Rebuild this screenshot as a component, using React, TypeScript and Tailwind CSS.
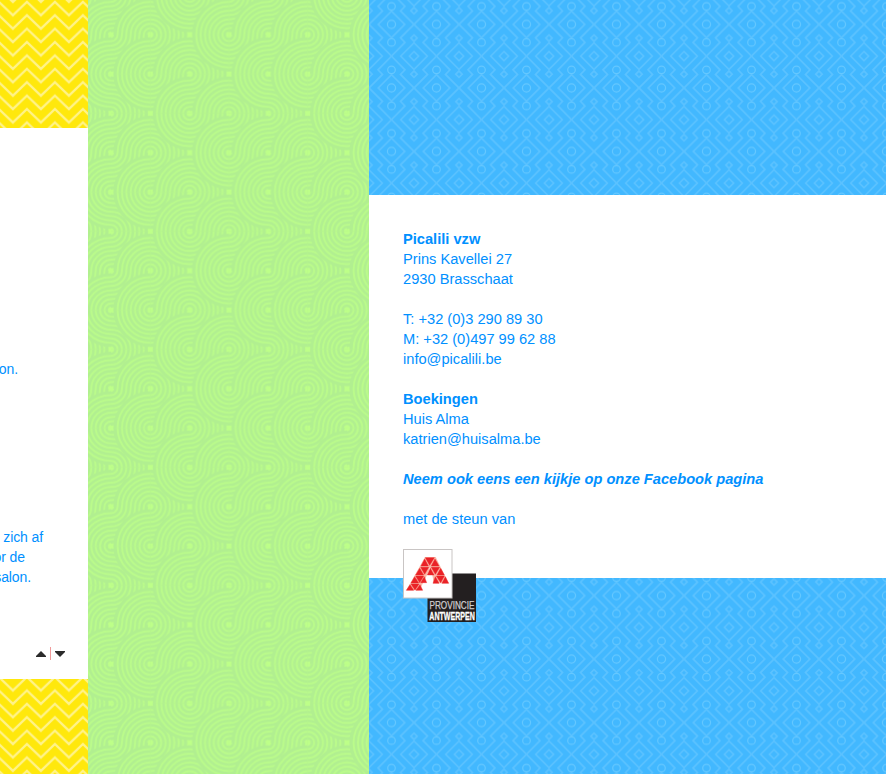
import React from "react";

type Corner = [number, number];

const NODE = 39.333;
const STEP = NODE / 9;

// Every cell of the swirl tile: column, row, front centre and back centre.
const CELLS: { c: number; r: number; front: Corner; back: Corner }[] = [
  { c: 0, r: 0, front: [1, 1], back: [0, 0] },
  { c: 1, r: 0, front: [2, 1], back: [1, 0] },
  { c: 2, r: 0, front: [3, 0], back: [2, 1] },
  { c: 3, r: 0, front: [4, 1], back: [3, 0] },
  { c: 0, r: 1, front: [1, 1], back: [0, 2] },
  { c: 1, r: 1, front: [2, 2], back: [1, 1] },
  { c: 2, r: 1, front: [3, 2], back: [2, 1] },
  { c: 3, r: 1, front: [4, 1], back: [3, 2] },
  { c: 0, r: 2, front: [1, 3], back: [0, 2] },
  { c: 1, r: 2, front: [2, 2], back: [1, 3] },
  { c: 2, r: 2, front: [3, 3], back: [2, 2] },
  { c: 3, r: 2, front: [4, 3], back: [3, 2] },
];

const RINGS = [8, 7, 6, 5, 4, 3, 2, 1];

function Rings({ at }: { at: Corner }) {
  const cx = at[0] * NODE;
  const cy = at[1] * NODE;
  return (
    <g>
      <circle cx={cx} cy={cy} r={STEP * 8.45} fill="#b1ef90" />
      <circle cx={cx} cy={cy} r={STEP * 8} fill="#bafb8b" />
      {RINGS.map((k) => (
        <circle key={k} cx={cx} cy={cy} r={STEP * k} fill="none" stroke="#b1ef90" strokeWidth="2.4" />
      ))}
      <circle cx={cx} cy={cy} r="2.6" fill="#bdff88" />
    </g>
  );
}

function Swirls() {
  return (
    <svg className="block h-full w-full" aria-hidden="true">
      <defs>
        {CELLS.map((s, i) => (
          <clipPath key={i} id={`cell${i}`}>
            <rect x={s.c * NODE} y={s.r * NODE} width={NODE + 0.05} height={NODE + 0.05} />
          </clipPath>
        ))}
        <pattern
          id="swirl"
          width={NODE * 4}
          height={NODE * 3}
          patternUnits="userSpaceOnUse"
          patternTransform="translate(23 34.7)"
        >
          <rect width={NODE * 4} height={NODE * 3} fill="#bdff88" />
          {CELLS.map((s, i) => (
            <g key={i} clipPath={`url(#cell${i})`}>
              <Rings at={s.back} />
              <Rings at={s.front} />
            </g>
          ))}
        </pattern>
      </defs>
      <rect width="100%" height="100%" fill="url(#swirl)" />
    </svg>
  );
}

function Chevrons({ id, y }: { id: string; y: number }) {
  return (
    <svg className="block h-full w-full" aria-hidden="true">
      <defs>
        <pattern
          id={id}
          width="28"
          height="13.4"
          patternUnits="userSpaceOnUse"
          patternTransform={`translate(12.9 ${y})`}
        >
          <rect width="28" height="13.4" fill="#ffe80c" />
          {[-13.4, 0, 13.4].map((d) => (
            <path
              key={d}
              d={`M-14 ${d}L0 ${d + 13.4}L14 ${d}L28 ${d + 13.4}L42 ${d}`}
              fill="none"
              stroke="#fff38a"
              strokeWidth="2.3"
            />
          ))}
        </pattern>
      </defs>
      <rect width="100%" height="100%" fill={`url(#${id})`} />
    </svg>
  );
}

const diamond = (x: number, y: number, r: number) =>
  `M${x - r} ${y}L${x} ${y - r}L${x + r} ${y}L${x} ${y + r}Z`;

function Lattice({ id, y }: { id: string; y: number }) {
  return (
    <svg className="block h-full w-full" aria-hidden="true">
      <defs>
        <pattern
          id={id}
          width="45"
          height="63.5"
          patternUnits="userSpaceOnUse"
          patternTransform={`translate(0 ${y})`}
        >
          <rect width="45" height="63.5" fill="#42b8ff" />
          <g fill="none" stroke="#5bc2ff" strokeWidth="1.7">
            {[0, 63.5].map((d) => (
              <g key={d}>
                <path d={diamond(22.5, d, 13.3)} />
                <g stroke="#65c8ff" strokeWidth="1.2">
                  <circle cx="22.5" cy={d} r="4.1" />
                  <circle cx="22.5" cy={d - 18} r="3.8" />
                  <circle cx="22.5" cy={d + 18} r="3.8" />
                </g>
              </g>
            ))}
            {[0, 45].map((x) => (
              <g key={x}>
                <path d={diamond(x, 31.75, 13.3)} />
                <path d={diamond(x, 31.75, 4.6)} />
                <path d={diamond(x, 13.75, 3.2)} />
                <path d={diamond(x, 49.75, 3.2)} />
              </g>
            ))}
            <path d="M0 0L13.5 13.5L9 18L22.5 31.75L9 45.5L13.5 50L0 63.5" />
            <path d="M45 0L31.5 13.5L36 18L22.5 31.75L36 45.5L31.5 50L45 63.5" />
          </g>
        </pattern>
      </defs>
      <rect width="100%" height="100%" fill={`url(#${id})`} />
    </svg>
  );
}

function ProvinceLogo() {
  return (
    <svg className="block h-[74px] w-[74px]" viewBox="0 0 74 74" role="img" aria-label="Provincie Antwerpen">
      <rect x="24.5" y="24.5" width="48.5" height="48.5" fill="#231f20" />
      <rect x="0.5" y="0.5" width="48.5" height="48.5" fill="#fff" stroke="#c9c5c4" />
      <g transform="scale(0.33333) translate(-24 -27)">
        <path d="M34 151L90 51H122L161 130H116L104 82L100 106L84 129L74 151Z" fill="#fbb9a8" />
        <path d="M96 105L104 88L112 105L116 131H84Z" fill="#fff" />
        <g fill="#ea2227" stroke="#ea2227" strokeWidth="1.2">
          <path d="M91 53H118L104 76Z" />
          <path d="M89 57L100 78H78Z" />
          <path d="M120 57L132 78H109Z" />
          <path d="M77 82H101L89 103Z" />
          <path d="M74 85L86 105H62Z" />
          <path d="M109 82H134L121 103Z" />
          <path d="M106 85L117 105H97Z" />
          <path d="M137 85L148 105H126Z" />
          <path d="M62 108H86L74 128Z" />
          <path d="M59 110L71 129H48Z" />
          <path d="M88 110L95 128H77Z" />
          <path d="M124 108H148L137 128Z" />
          <path d="M121 110L132 130H114Z" />
          <path d="M151 110L161 130H141Z" />
          <path d="M48 132H72L60 150Z" />
          <path d="M45 134L56 151H34Z" />
          <path d="M75 134L83 151H63Z" />
        </g>
      </g>
      <g fontFamily="'Liberation Sans Narrow', 'Liberation Sans', Arial, sans-serif">
        <text x="26.5" y="60" fontSize="10.8" fill="#d0cecf" stroke="#d0cecf" strokeWidth="0.25" textLength="45" lengthAdjust="spacingAndGlyphs">
          PROVINCIE
        </text>
        <text x="26.3" y="70.6" fontSize="10.8" fontWeight="700" fill="#fff" stroke="#fff" strokeWidth="0.3" textLength="45.500" lengthAdjust="spacingAndGlyphs">
          ANTWERPEN
        </text>
      </g>
    </svg>
  );
}

export default function App() {
  return (
    <div className="flex h-[774px] w-[886px] overflow-hidden bg-white font-['Liberation_Sans',Arial,sans-serif] leading-5 text-[#0090ff]">
      <aside className="flex w-[88px] shrink-0 flex-col overflow-hidden">
        <div className="h-32 shrink-0">
          <Chevrons id="chevron-top" y={28.7} />
        </div>
        <div className="flex h-[551px] shrink-0 flex-col items-start bg-white text-sm/5 tracking-[-0.1px] whitespace-nowrap">
          <p className="mt-[231px] flex w-[18px] justify-end">on.</p>
          <p className="mt-[148px] flex w-[43px] justify-end">zich af</p>
          <p className="flex w-[25px] justify-end">or de</p>
          <p className="flex w-[31px] justify-end">salon.</p>
          <div className="mt-[60px] ml-9 flex h-[13px] items-start">
            <svg className="mt-1 h-[6px] w-[10px]" viewBox="0 0 10 6" aria-hidden="true">
              <path d="M5 0L10 5V6H0V5Z" fill="#2b2b2b" />
            </svg>
            <span className="mx-1 h-[13px] w-px bg-[#f09a9a]" />
            <svg className="mt-1 h-[6px] w-[10px]" viewBox="0 0 10 6" aria-hidden="true">
              <path d="M5 6L10 1V0H0V1Z" fill="#2b2b2b" />
            </svg>
          </div>
        </div>
        <div className="h-[95px] shrink-0">
          <Chevrons id="chevron-bottom" y={11.5} />
        </div>
      </aside>

      <div className="w-[281px] shrink-0">
        <Swirls />
      </div>

      <main className="flex w-[517px] shrink-0 flex-col">
        <div className="h-[195px] shrink-0">
          <Lattice id="lattice-top" y={24.4} />
        </div>
        <section className="z-10 h-[383px] shrink-0 bg-white pt-[34px] pl-[34px] text-[14.65px]/5">
          <p className="font-bold">Picalili vzw</p>
          <p>Prins Kavellei 27</p>
          <p>2930 Brasschaat</p>
          <p className="mt-5">T: +32 (0)3 290 89 30</p>
          <p>M: +32 (0)497 99 62 88</p>
          <p>info@picalili.be</p>
          <p className="mt-5 font-bold">Boekingen</p>
          <p>Huis Alma</p>
          <p>katrien@huisalma.be</p>
          <p className="mt-5 font-bold italic">Neem ook eens een kijkje op onze Facebook pagina</p>
          <p className="mt-5">met de steun van</p>
          <div className="mt-5">
            <ProvinceLogo />
          </div>
        </section>
        <div className="h-[196px] shrink-0">
          <Lattice id="lattice-bottom" y={17.6} />
        </div>
      </main>
    </div>
  );
}
